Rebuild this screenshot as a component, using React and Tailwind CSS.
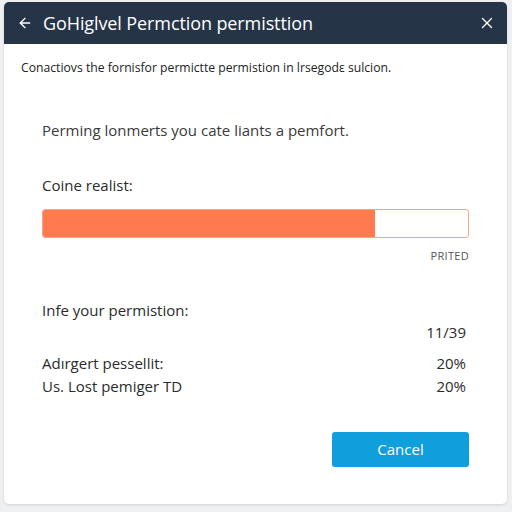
import { ArrowLeft, X } from 'lucide-react'

function StatRow({ label, value }) {
  return (
    <div className="flex items-center justify-between h-[23px]">
      <span>{label}</span>
      <span className="pr-[3px]">{value}</span>
    </div>
  )
}

export default function App() {
  const progress = 78

  return (
    <div className="w-[512px] h-[512px] bg-[#eef0f2] pt-[2px] px-[4px] font-['Open_Sans',sans-serif]">
      <div className="w-[503px] h-[502px] bg-white rounded-[5px] overflow-hidden shadow-[0_1px_3px_rgba(0,0,0,0.12)] flex flex-col">
        {/* header */}
        <div className="h-[42px] bg-[#263447] flex items-center pl-[13px] pr-[11px] text-white">
          <ArrowLeft size={16} strokeWidth={2} className="mr-[10px]" />
          <h1 className="text-[18px] leading-none tracking-[-0.1px] flex-1">GoHiglvel Permction permisttion</h1>
          <X size={18} strokeWidth={1.8} />
        </div>

        <p className="mt-[15px] pl-[17px] text-[12.2px] leading-[18px] text-[#222]">
          Conactiovs the fornisfor permictte permistion in lrsegodε sulcion.
        </p>

        <div className="px-[38px] text-[#2b2b2b]">
          <p className="mt-[43px] text-[15px] leading-[20px] text-[#3a3a3a]">
            Perming lonmerts you cate liants a pemfort.
          </p>

          <p className="mt-[35px] text-[15px] leading-[20px]">Coine realist:</p>

          <div className="mt-[14px] h-[29px] rounded-[3px] border border-[#f5a389] overflow-hidden">
            <div className="h-full bg-[#ff7b4f]" style={{ width: `${progress}%` }} />
          </div>
          <div className="mt-[11px] text-right text-[11px] leading-[14px] text-[#555] tracking-[0.3px]">PRITED</div>

          <p className="mt-[37px] text-[15px] leading-[20px]">Infe your permistion:</p>
          <div className="mt-[2px] text-right pr-[3px] text-[15px] leading-[20px]">11/39</div>

          <div className="mt-[10px] text-[15px]">
            <StatRow label="Adırgert pessellit:" value="20%" />
            <StatRow label="Us. Lost pemiger TD" value="20%" />
          </div>

          <div className="mt-[34px] flex justify-end">
            <button className="w-[137px] h-[35px] rounded-[3px] bg-[#0f9fdc] text-white text-[15px]">
              Cancel
            </button>
          </div>
        </div>
      </div>
    </div>
  )
}
